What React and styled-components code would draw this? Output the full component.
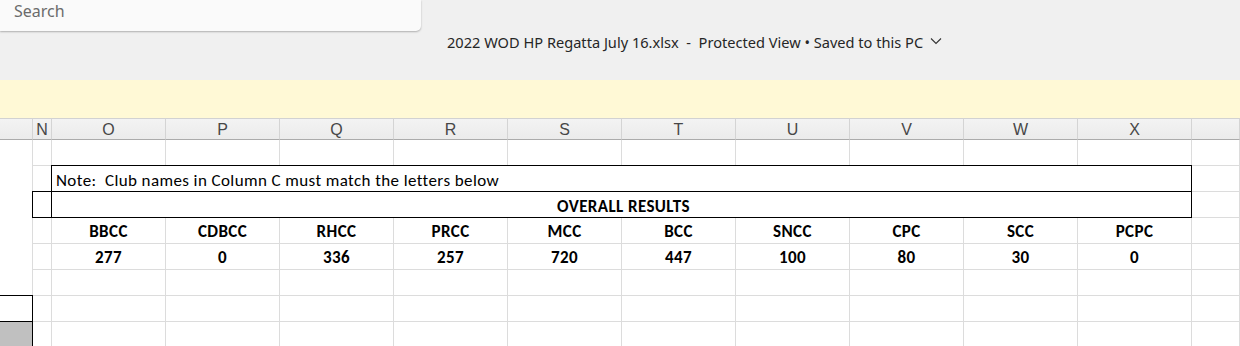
import React from 'react';
import styled, { createGlobalStyle } from 'styled-components';

const GlobalStyle = createGlobalStyle`
  html, body { margin: 0; padding: 0; background: #ffffff; overflow: hidden; }
  body { width: 1240px; height: 346px; }
`;

const Page = styled.div`
  width: 1240px;
  height: 346px;
  overflow: hidden;
  display: flex;
  flex-direction: column;
`;

const TitleBar = styled.header`
  height: 80px;
  flex-shrink: 0;
  background: #f0f0f0;
  display: flex;
  flex-direction: column;
`;

const SearchBox = styled.div`
  width: 421px;
  height: 31px;
  box-sizing: border-box;
  background: #fafafa;
  border-bottom-right-radius: 5px;
  box-shadow: 0 1px 2px rgba(0, 0, 0, 0.28);
  padding-left: 14px;
  font-family: "Noto Sans", "Open Sans", sans-serif;
  font-size: 16px;
  line-height: 22px;
  color: #6b6b6b;
`;

const TitleRow = styled.div`
  display: flex;
  align-items: center;
  gap: 7px;
  padding-left: 447px;
  margin-top: 1px;
  height: 20px;
  font-family: "Noto Sans", "Open Sans", sans-serif;
  font-size: 14.6px;
  color: #262626;
  white-space: pre;
`;

const Chevron = styled.svg`
  width: 12px;
  height: 8px;
  margin-top: -2px;
`;

const MessageBar = styled.div`
  height: 38px;
  flex-shrink: 0;
  background: #fff9d6;
`;

const Sheet = styled.div`
  display: grid;
  grid-template-columns: 33px 19px repeat(10, 114px) 1fr;
  grid-template-rows: 22px repeat(8, 26px);
  font-family: "Carlito", "Lato", "Open Sans", sans-serif;
  font-size: 17px;
  letter-spacing: 0.4px;
  color: #000;
`;

const HeaderCell = styled.div`
  box-sizing: border-box;
  background: linear-gradient(#f3f3f3, #ebebeb);
  border-top: 1px solid #d2d2d2;
  border-right: 1px solid #d4d4d4;
  border-bottom: 1px solid #ababab;
  display: flex;
  align-items: center;
  justify-content: center;
  font-family: "Liberation Sans", Arial, sans-serif;
  font-size: 16px;
  letter-spacing: 0;
  color: #474747;
  padding-top: 1px;
`;

const Cell = styled.div`
  box-sizing: border-box;
  border-right: 1px solid #dcdcdc;
  border-bottom: ${(p) => (p.$noBottom ? 'none' : '1px solid #dcdcdc')};
  display: flex;
  align-items: flex-end;
  justify-content: center;
  padding-bottom: 1px;
  font-weight: ${(p) => (p.$bold ? 700 : 400)};
  white-space: nowrap;
`;

const BoxedCell = styled.div`
  box-sizing: border-box;
  grid-column: ${(p) => p.$col};
  margin: -1px 0 0 -1px;
  border: 1px solid #000;
  background: ${(p) => p.$fill || '#fff'};
  position: relative;
  z-index: 1;
  display: flex;
  align-items: flex-end;
  justify-content: ${(p) => (p.$center ? 'center' : 'flex-start')};
  padding: 0 0 0 4px;
  font-weight: ${(p) => (p.$bold ? 700 : 400)};
  white-space: pre;
`;

const EdgeBox = styled.div`
  box-sizing: border-box;
  margin-top: -1px;
  border-top: 1px solid #000;
  border-right: 1px solid #000;
  border-bottom: 1px solid #000;
  background: ${(p) => p.$fill || '#fff'};
  position: relative;
  z-index: 1;
`;

const columns = ['O', 'P', 'Q', 'R', 'S', 'T', 'U', 'V', 'W', 'X'];
const clubs = [
  ['BBCC', 277],
  ['CDBCC', 0],
  ['RHCC', 336],
  ['PRCC', 257],
  ['MCC', 720],
  ['BCC', 447],
  ['SNCC', 100],
  ['CPC', 80],
  ['SCC', 30],
  ['PCPC', 0],
];

function PlainRow({ edge }) {
  return (
    <>
      {edge || <Cell $noBottom />}
      <Cell />
      {columns.map((c) => (
        <Cell key={c} />
      ))}
      <Cell />
    </>
  );
}

export default function App() {
  return (
    <Page>
      <GlobalStyle />
      <TitleBar>
        <SearchBox>Search</SearchBox>
        <TitleRow>
          <span>2022 WOD HP Regatta July 16.xlsx  -  Protected View • Saved to this PC</span>
          <Chevron viewBox="0 0 12 8">
            <polyline points="1,1.5 6,6.5 11,1.5" fill="none" stroke="#333" strokeWidth="1.1" />
          </Chevron>
        </TitleRow>
      </TitleBar>
      <MessageBar />
      <Sheet>
        <HeaderCell />
        <HeaderCell>N</HeaderCell>
        {columns.map((c) => (
          <HeaderCell key={c}>{c}</HeaderCell>
        ))}
        <HeaderCell />

        <PlainRow />

        <Cell $noBottom />
        <Cell />
        <BoxedCell $col="3 / 13">Note:  Club names in Column C must match the letters below</BoxedCell>
        <Cell />

        <Cell $noBottom />
        <BoxedCell $col="2 / 3" />
        <BoxedCell $col="3 / 13" $bold $center>OVERALL RESULTS</BoxedCell>
        <Cell />

        <Cell $noBottom />
        <Cell />
        {clubs.map(([name]) => (
          <Cell key={name} $bold>{name}</Cell>
        ))}
        <Cell />

        <Cell $noBottom />
        <Cell />
        {clubs.map(([name, score]) => (
          <Cell key={name} $bold>{score}</Cell>
        ))}
        <Cell />

        <PlainRow />
        <PlainRow edge={<EdgeBox />} />
        <PlainRow edge={<EdgeBox $fill="#c0c0c0" />} />
      </Sheet>
    </Page>
  );
}
